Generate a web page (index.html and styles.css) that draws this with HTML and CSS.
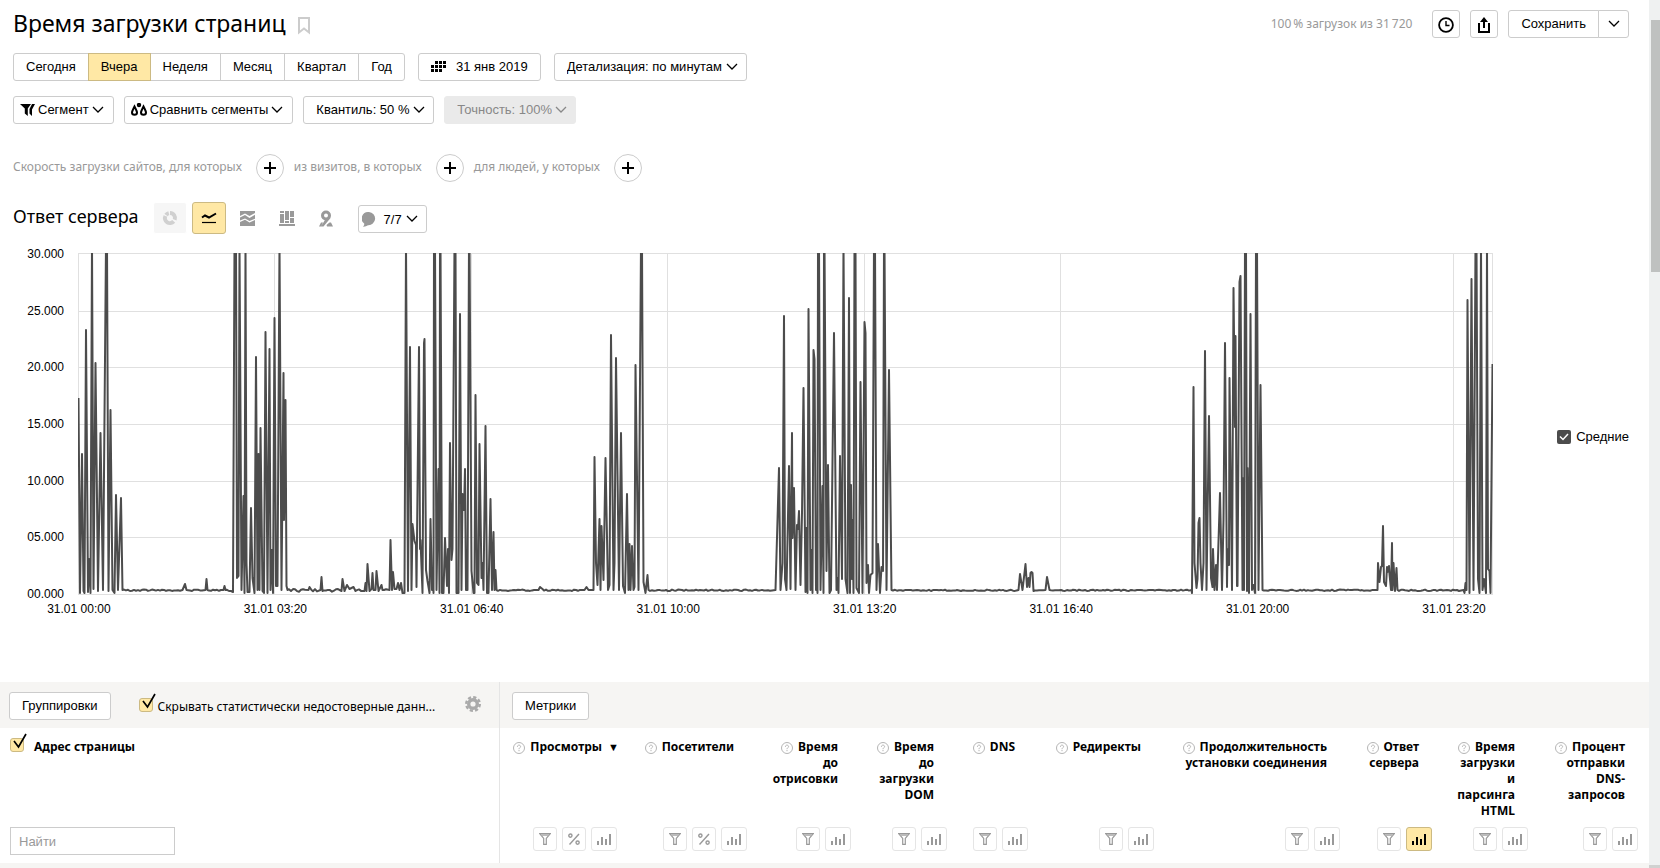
FILE: index.html
```html
<!DOCTYPE html>
<html lang="ru">
<head>
  <meta charset="UTF-8">
  <meta name="viewport" content="width=device-width, initial-scale=1.0">
  <title>Время загрузки страниц</title>
  <link rel="stylesheet" href="styles.css">
</head>
<body>
  <!-- Shared icons -->
  <svg class="sprite" width="0" height="0" aria-hidden="true">
    <symbol id="chevron" viewBox="0 0 12 8"><path d="M1 1l5 5 5-5" fill="none" stroke="currentColor" stroke-width="1.3"/></symbol>
    <symbol id="plus" viewBox="0 0 12 12"><path d="M6 0v12M0 6h12" stroke="currentColor" stroke-width="2"/></symbol>
    <symbol id="tick" viewBox="0 0 16 18"><path d="M3 8l4.500 6L15 1" fill="none" stroke="#000" stroke-width="1.700"/></symbol>
    <symbol id="help" viewBox="0 0 12 12"><circle cx="6" cy="6" r="5.5" fill="none" stroke="#b5b5b5"/><path d="M4.4 4.8C4.4 2.5 7.7 2.7 7.6 4.7 7.5 5.8 6 5.7 6 7.2M6 8v1.2" fill="none" stroke="#b5b5b5"/></symbol>
    <symbol id="filter" viewBox="0 0 12 12"><path d="M.8.7h10.4L7.3 5.4v6H4.7v-6z" fill="none" stroke="#999" stroke-width="1.2"/><path d="M1.5 1h9L9 3H3z" fill="#bbb"/></symbol>
    <symbol id="percent" viewBox="0 0 12 12"><g fill="none" stroke="#999" stroke-width="1.4"><path d="M11 1L1.5 11.5"/><circle cx="2.4" cy="2.6" r="1.6"/><circle cx="9.6" cy="9.6" r="1.6"/></g></symbol>
    <symbol id="bars" viewBox="0 0 14 11"><path d="M0 7h2v4H0zM4 3h2v8H4zM8 5h2v6H8zM12 0h2v11h-2z" fill="currentColor"/></symbol>
  </svg>

  <main class="page">
    <header class="header">
      <h1 class="title">Время загрузки страниц</h1>
      <svg class="bookmark" width="12" height="18" viewBox="0 0 12 18"><path d="M1 1h10v14.5l-5-4-5 4z" fill="none" stroke="#ccc" stroke-width="2"/></svg>
      <span class="sample">100&#8201;% загрузок из 31&#8201;720</span>
      <button class="button button-icon" aria-label="История">
        <svg width="16" height="16" viewBox="0 0 16 16" fill="none" stroke="#000"><circle cx="8" cy="8" r="6.9" stroke-width="1.8"/><path d="M8 4v4.5h3.5" stroke-width="1.4"/></svg>
      </button>
      <button class="button button-icon" aria-label="Экспорт">
        <svg width="12" height="16" viewBox="0 0 12 16"><path d="M1 6v9h10V6" fill="none" stroke="#000" stroke-width="2"/><path d="M5 11V5H2l4-5 4 5H7v6z"/></svg>
      </button>
      <div class="group save">
        <button class="button">Сохранить</button>
        <button class="button" aria-label="Другие варианты"><svg width="12" height="8"><use href="#chevron"/></svg></button>
      </div>
    </header>

    <div class="row periods">
      <div class="group">
        <button class="button">Сегодня</button>
        <button class="button active">Вчера</button>
        <button class="button">Неделя</button>
        <button class="button">Месяц</button>
        <button class="button">Квартал</button>
        <button class="button">Год</button>
      </div>
      <button class="button date">
        <svg width="15" height="11" viewBox="0 0 15 11"><path d="M4 0h3v3H4zM8 0h3v3H8zM12 0h3v3h-3zM0 4h3v3H0zM4 4h3v3H4zM8 4h3v3H8zM12 4h3v3h-3zM0 8h3v3H0zM4 8h3v3H4zM8 8h3v3H8z"/></svg>
        31 янв 2019
      </button>
      <label class="select">
        <select aria-label="Детализация"><option>Детализация: по минутам</option></select>
        <svg width="12" height="8"><use href="#chevron"/></svg>
      </label>
    </div>

    <div class="row segments">
      <button class="button menu">
        <svg width="15" height="12" viewBox="0 0 15 12"><path d="M0 0h11L7.800 4.500V12L4.800 9.500V4.500z"/><path d="M12 0h3l-3 5.500V12L9.500 9.500V5z"/></svg>
        Сегмент
        <svg width="12" height="8"><use href="#chevron"/></svg>
      </button>
      <button class="button menu">
        <svg width="16" height="13" viewBox="0 0 16 13" fill="none" stroke="#000" stroke-width="2"><path d="M3.500 3.500C2 6.500 1 8 1 9.600c0 3 5 3 5 0C6 8 5 6.500 3.500 3.500z"/><path d="M12.500 3.500C11 6.500 10 8 10 9.600c0 3 5 3 5 0 0-1.600-1-3.100-2.500-6.100z"/><circle cx="8" cy="2" r="1.200"/></svg>
        Сравнить сегменты
        <svg width="12" height="8"><use href="#chevron"/></svg>
      </button>
      <label class="select">
        <select aria-label="Квантиль"><option>Квантиль: 50 %</option></select>
        <svg width="12" height="8"><use href="#chevron"/></svg>
      </label>
      <label class="select disabled">
        <select aria-label="Точность" disabled><option>Точность: 100%</option></select>
        <svg width="12" height="8"><use href="#chevron"/></svg>
      </label>
    </div>

    <div class="row conditions">
      <span>Скорость загрузки сайтов, для которых</span>
      <button class="add" aria-label="Добавить условие"><svg width="12" height="12"><use href="#plus"/></svg></button>
      <span>из визитов, в которых</span>
      <button class="add" aria-label="Добавить условие"><svg width="12" height="12"><use href="#plus"/></svg></button>
      <span>для людей, у которых</span>
      <button class="add" aria-label="Добавить условие"><svg width="12" height="12"><use href="#plus"/></svg></button>
    </div>

    <div class="row chart-head">
      <h2 class="subtitle">Ответ сервера</h2>
      <div class="types">
        <button class="type off" disabled aria-label="Круговая">
          <svg width="16" height="16" viewBox="0 0 16 16" fill="none" stroke="#d0d0d0" stroke-width="4"><path d="M8 3A5 5 0 0 1 12.700 9.700"/><path d="M11.700 11.400A5 5 0 0 1 3.400 6"/><path d="M4 5A5 5 0 0 1 6.800 3.100"/></svg>
        </button>
        <button class="type active" aria-label="Линии">
          <svg width="16" height="12" viewBox="0 0 16 12" fill="none" stroke="#000"><path d="M1 5.500l3-2 4 2 7-4" stroke-width="2"/><path d="M1 10.500h14" stroke-width="1.200"/></svg>
        </button>
        <button class="type" aria-label="Области">
          <svg width="15" height="15" viewBox="0 0 15 15"><path d="M0 0h15v2L9.500 5 5 2.500 0 5zM0 6.500L5 4l4.500 3L15 3.800v4L9.500 10 5 7.500 0 9.500zM0 11l5-2.200 4.500 2.700L15 9v6H0z" fill="#999"/></svg>
        </button>
        <button class="type" aria-label="Колонки">
          <svg width="16" height="16" viewBox="0 0 16 16"><path d="M1 1h4v2H1zM1 4h4v9H1zM6 1h4v9H6zM6 11h4v2H6zM11 1h4v6h-4zM11 8h4v5h-4zM0 14h16v2H0z" fill="#999"/></svg>
        </button>
        <button class="type" aria-label="Карта">
          <svg width="14" height="17" viewBox="0 0 14 17"><circle cx="7" cy="5.500" r="3.500" fill="none" stroke="#999" stroke-width="3"/><path d="M11.500 8L4.500 16.500H2L6.500 9zM0 16.500l2-4h2l-2 4zM7.500 15l3-2.500h1.500l2 4H8z" fill="#999"/></svg>
        </button>
      </div>
      <button class="button comments">
        <svg width="14" height="16" viewBox="0 0 14 16"><path d="M7 1a6.500 6.500 0 1 1-1 13.200C4.500 15 3 15.800 1 15.600c1-.8 1.400-1.800 1.200-3A6.500 6.500 0 0 1 7 1z" fill="#999"/></svg>
        <span>7/7</span>
        <svg width="12" height="8"><use href="#chevron"/></svg>
      </button>
    </div>

    <section class="chart">
      <div class="axis-y">
        <span>30.000</span>
        <span>25.000</span>
        <span>20.000</span>
        <span>15.000</span>
        <span>10.000</span>
        <span>05.000</span>
        <span>00.000</span>
      </div>
      <div class="plot">
        <svg class="lines" viewBox="0 0 1415 342" preserveAspectRatio="none">
          <path class="grid" d="M0 .5h1415M0 58.500h1415M0 114.500h1415M0 171.500h1415M0 228.500h1415M0 284.500h1415M0 341.500h1415M.5 0v342M196.500 0v342M393.500 0v342M589.500 0v342M786.500 0v342M982.500 0v342M1178.500 0v342M1375.500 0v342M1414.500 0v342"/>
          <polyline id="series" class="series" points=""/>
        </svg>
        <div class="axis-x">
          <span>31.01 00:00</span>
          <span>31.01 03:20</span>
          <span>31.01 06:40</span>
          <span>31.01 10:00</span>
          <span>31.01 13:20</span>
          <span>31.01 16:40</span>
          <span>31.01 20:00</span>
          <span>31.01 23:20</span>
        </div>
      </div>
      <label class="legend">
        <span class="check-dark">
          <input type="checkbox" checked>
          <svg width="10" height="8" viewBox="0 0 10 8"><path d="M1 3.500l3 3L9 1" fill="none" stroke="#fff" stroke-width="1.500"/></svg>
        </span>
        Средние
      </label>
    </section>

    <div class="toolbar">
      <div class="toolbar-left">
        <button class="button">Группировки</button>
        <label class="hide-rows">
          <span class="check"><input type="checkbox" checked><svg width="16" height="18"><use href="#tick"/></svg></span>
          <span class="hide-text">Скрывать статистически недостоверные данн...</span>
        </label>
        <button class="gear" aria-label="Настройки">
          <svg width="16" height="16" viewBox="0 0 16 16"><circle cx="8" cy="8" r="4.300" fill="none" stroke="#aaa" stroke-width="3.400"/><circle cx="8" cy="8" r="6.800" fill="none" stroke="#aaa" stroke-width="2.400" stroke-dasharray="3.200 2.140"/></svg>
        </button>
      </div>
      <div class="toolbar-right">
        <button class="button">Метрики</button>
      </div>
    </div>

    <table class="metrics">
      <colgroup>
        <col class="w-page"><col class="w-views"><col class="w-users"><col class="w-paint"><col class="w-dom"><col class="w-dns"><col class="w-redirect"><col class="w-connect"><col class="w-server"><col class="w-parse"><col class="w-share">
      </colgroup>
      <thead>
        <tr class="names">
          <th class="page-col">
            <label class="page-label">
              <span class="check"><input type="checkbox" checked><svg width="16" height="18"><use href="#tick"/></svg></span>
              Адрес страницы
            </label>
          </th>
          <th class="sorted"><svg class="help" width="12" height="12"><use href="#help"/></svg>Просмотры<span class="arrow">▼</span></th>
          <th><svg class="help" width="12" height="12"><use href="#help"/></svg>Посетители</th>
          <th><svg class="help" width="12" height="12"><use href="#help"/></svg>Время<br>до<br>отрисовки</th>
          <th><svg class="help" width="12" height="12"><use href="#help"/></svg>Время<br>до<br>загрузки<br>DOM</th>
          <th><svg class="help" width="12" height="12"><use href="#help"/></svg>DNS</th>
          <th><svg class="help" width="12" height="12"><use href="#help"/></svg>Редиректы</th>
          <th><svg class="help" width="12" height="12"><use href="#help"/></svg>Продолжительность<br>установки соединения</th>
          <th><svg class="help" width="12" height="12"><use href="#help"/></svg>Ответ<br>сервера</th>
          <th><svg class="help" width="12" height="12"><use href="#help"/></svg>Время<br>загрузки<br>и<br>парсинга<br>HTML</th>
          <th><svg class="help" width="12" height="12"><use href="#help"/></svg>Процент<br>отправки<br>DNS-<br>запросов</th>
        </tr>
        <tr class="tools">
          <td class="page-col"><input class="search" type="text" placeholder="Найти" aria-label="Найти"></td>
          <td data-tools="filter percent bars"></td>
          <td data-tools="filter percent bars"></td>
          <td data-tools="filter bars"></td>
          <td data-tools="filter bars"></td>
          <td data-tools="filter bars"></td>
          <td data-tools="filter bars"></td>
          <td data-tools="filter bars"></td>
          <td data-tools="filter bars" class="current"></td>
          <td data-tools="filter bars"></td>
          <td data-tools="filter bars"></td>
        </tr>
      </thead>
    </table>
    <div class="totals"></div>
  </main>

  <div class="scroll" aria-hidden="true">
    <div class="thumb"></div>
    <div class="corner"></div>
  </div>

  <script src="script.js"></script>
</body>
</html>
```

FILE: styles.css
```css
* {
  box-sizing: border-box;
}

body {
  display: grid;
  grid-template-columns: minmax(0, 1fr) 11px;
  min-height: 100vh;
  margin: 0;
  background: #fff;
  color: #000;
  font-family: "Noto Sans", sans-serif;
  font-size: 12px;
}

.sprite {
  position: absolute;
}

svg {
  flex: none;
}

.page {
  display: flex;
  flex-direction: column;
  padding-top: 10px;
}

/* Buttons */
button,
select,
input {
  margin: 0;
  font-family: "Liberation Sans", Arial, sans-serif;
  font-size: 13px;
  color: #000;
}

.button {
  display: flex;
  align-items: center;
  justify-content: center;
  height: 28px;
  padding: 0 12px 2px;
  border: 1px solid #ccc;
  border-radius: 3px;
  background: #fff;
  white-space: nowrap;
  cursor: pointer;
}

.button-icon {
  width: 28px;
  padding: 1px 0 0;
}

.group {
  display: flex;
}

.group .button {
  border-radius: 0;
}

.group .button + .button {
  margin-left: -1px;
}

.group .button:first-child {
  border-radius: 3px 0 0 3px;
}

.group .button:last-child {
  border-radius: 0 3px 3px 0;
}

.group .active {
  position: relative;
  border-color: #ccba83;
  background: #ffe8a5;
}

.select {
  display: flex;
  align-items: center;
  gap: 3px;
  height: 28px;
  padding: 0 8px 1px 12px;
  border: 1px solid #ccc;
  border-radius: 3px;
}

.select select {
  appearance: none;
  padding: 0;
  border: 0;
  background: none;
}

.select.disabled {
  border-color: #eaeaea;
  background: #eaeaea;
  color: #888;
}

.select.disabled select {
  color: #888;
  opacity: 1;
}

/* Header */
.header {
  display: flex;
  align-items: center;
  height: 28px;
  padding: 0 20px 0 13px;
}

.title {
  margin: 0;
  padding-bottom: 2px;
  font-size: 23px;
  font-weight: 400;
  line-height: 26px;
}

.bookmark {
  margin: 4px 0 0 12px;
}

.sample {
  margin-left: auto;
  margin-right: 10px;
  padding-bottom: 2px;
  color: #999;
}

.header .button-icon {
  margin-left: 10px;
}

.save {
  margin-left: 10px;
}

.save .button:last-child {
  width: 31px;
  padding: 0;
}

/* Filters */
.row {
  display: flex;
  align-items: center;
  padding-left: 13px;
}

.periods {
  gap: 13px;
  margin-top: 15px;
}

.date {
  gap: 10px;
}

.segments {
  gap: 10px;
  margin-top: 15px;
}

.menu {
  gap: 3px;
  padding: 0 9px 1px 6px;
}

.conditions {
  gap: 10px;
  margin-top: 30px;
  color: #999;
}

.conditions span {
  padding-bottom: 3px;
}

.add {
  display: flex;
  align-items: center;
  justify-content: center;
  width: 28px;
  height: 28px;
  margin-left: 4px;
  padding: 0;
  border: 1px solid #ccc;
  border-radius: 50%;
  background: #fff;
}

/* Chart */
.chart-head {
  height: 32px;
  margin-top: 20px;
}

.subtitle {
  margin: 0;
  padding-bottom: 4px;
  font-size: 18px;
  font-weight: 400;
}

.types {
  display: flex;
  gap: 5px;
  margin: 0 15px 0 14px;
}

.type {
  display: flex;
  align-items: center;
  justify-content: center;
  width: 34px;
  height: 32px;
  padding: 0;
  border: 1px solid transparent;
  border-radius: 3px;
  background: none;
}

.type.off {
  border-color: #fff;
  background: #f6f6f6;
}

.type.active {
  border-color: #ccba83;
  background: #ffe8a5;
}

.comments {
  gap: 4px;
  margin-top: 2px;
  padding: 0 8px 0 3px;
}

.comments span {
  padding-left: 4px;
}

.chart {
  display: grid;
  grid-template-columns: 64px minmax(0, 1fr) 136px;
  padding-right: 20px;
  margin-top: 19px;
  font: 12px/14px "Liberation Sans", Arial, sans-serif;
}

.axis-y {
  display: flex;
  flex-direction: column;
  justify-content: space-between;
  align-items: flex-end;
  height: 354px;
  margin-top: -6px;
}

.plot {
  margin-left: 14px;
}

.lines {
  display: block;
  width: 100%;
  height: 342px;
}

.grid {
  fill: none;
  stroke: #e0e0e0;
  stroke-width: 1;
}

.series {
  fill: none;
  stroke: #4c4c4c;
  stroke-width: 2;
  stroke-linejoin: round;
}

/* one label for each 200 of the 1440 minutes */
.axis-x {
  display: flex;
  height: 14px;
  margin: 7px 0 0 -6.88%;
}

.axis-x span {
  flex: 0 0 12.99%;
  text-align: center;
}

.legend {
  display: flex;
  align-items: center;
  justify-content: flex-end;
  gap: 5px;
  height: 367px;
  font-size: 13px;
}

.check-dark {
  position: relative;
  width: 14px;
  height: 14px;
}

.check-dark input {
  display: block;
  appearance: none;
  width: 14px;
  height: 14px;
  border-radius: 2px;
  background: #4c4c4c;
}

.check-dark svg {
  position: absolute;
  top: 3px;
  left: 2px;
}

/* Table */
.toolbar {
  display: grid;
  grid-template-columns: 500px minmax(0, 1fr);
  height: 46px;
  margin-top: 62px;
  background: #f6f5f3;
}

.toolbar-left,
.toolbar-right {
  display: flex;
  align-items: center;
}

.toolbar-left {
  padding: 2px 18px 0 9px;
  border-right: 1px solid #e5e5e5;
}

.toolbar-right {
  padding: 2px 0 0 12px;
}

.hide-rows {
  display: flex;
  align-items: center;
  gap: 5px;
  margin-left: 28px;
}

.hide-text {
  white-space: nowrap;
}

.check {
  position: relative;
  flex: none;
  width: 14px;
  height: 14px;
}

.hide-rows .check {
  margin-bottom: 2px;
}

.check input {
  display: block;
  appearance: none;
  width: 14px;
  height: 14px;
  border: 1px solid #ccba83;
  border-radius: 3px;
  background: #ffe8a5;
}

.check svg {
  position: absolute;
  top: -5px;
  left: 1px;
}

.gear {
  display: flex;
  margin: 0 0 4px auto;
  padding: 0;
  border: 0;
  background: none;
}

.metrics {
  width: 100%;
  table-layout: fixed;
  border-collapse: separate;
  border-spacing: 0;
}

.w-page { width: 500px; }
.w-views { width: 128px; }
.w-users { width: 130px; }
.w-paint { width: 104px; }
.w-dom { width: 96px; }
.w-dns { width: 81px; }
.w-redirect { width: 126px; }
.w-connect { width: 186px; }
.w-server { width: 92px; }
.w-parse { width: 96px; }
.w-share { width: 110px; }

.metrics th {
  height: 99px;
  padding: 11px 24px 0 0;
  vertical-align: top;
  text-align: right;
  font-weight: 700;
  line-height: 16px;
  white-space: nowrap;
}

.metrics td {
  height: 36px;
  padding: 0 11px 0 0;
  vertical-align: top;
}

.metrics .sorted {
  padding-right: 9px;
}

.arrow {
  margin-left: 6px;
  font-size: 11px;
}

.help {
  margin-right: 5px;
  vertical-align: -3px;
}

.metrics .page-col {
  padding-left: 10px;
  border-right: 1px solid #e5e5e5;
  text-align: left;
}

.page-label {
  display: flex;
  gap: 10px;
}

.page-label .check {
  margin-top: -1px;
}

.search {
  display: block;
  width: 165px;
  height: 28px;
  padding: 0 8px;
  border: 1px solid #ccc;
}

.search::placeholder {
  color: #999;
}

.tool-list {
  display: flex;
  justify-content: flex-end;
  gap: 5px;
}

.tool {
  display: flex;
  align-items: center;
  justify-content: center;
  width: 24px;
  height: 24px;
  padding: 0;
  border: 1px solid #e5e5e5;
  border-radius: 3px;
  background: #fff;
  color: #999;
}

.tool-bars {
  width: 26px;
}

.current .tool-bars {
  border-color: #ccba83;
  background: #ffe8a5;
  color: #000;
}

.totals {
  flex: 1;
  min-height: 5px;
  background: #f6f5f3;
}

/* Scroll track */
.scroll {
  display: flex;
  flex-direction: column;
  padding: 20px 0 0 2px;
  background: #eff1f1;
}

.thumb {
  height: 252px;
  background: #bfc1c0;
}

.corner {
  height: 3px;
  margin: auto 0 0 -2px;
  background: #d0d1d0;
}
```

FILE: script.js
```js
// Points of the response time line, x 0..1415, y 0..342 from the top
const points = [
  [0,145],[1.5,340],[3.5,201],[5,338],[6,340],[7.5,77],[9.5,339],[10.5,306],[12,340],[13.5,-9],[15,336],[17,110],[19.5,338],[22,180],[24.5,337],[27.5,-9],[28.5,-9],[30,338],[32,157],[34,337],[36,340],[37.5,242],[39.5,337],[42.5,245],[44,337],
  [104,337],[106.5,331],[108,337],[127,337],[128,326],[129,337],[145,337],[146,333],[147,337],
  [154.5,339],[156,-9],[157.5,-9],[158.5,325],[160,323],[161,-9],[163,337],[165,243],[166,340],[167,-9],[168,310],[169,339],[171,339],[172.5,255],[174,325],[176,340],[177.5,104],[179,337],[180,201],[181,337],[182,175],[184,338],[185.5,340],[187,79],[189,340],[191,96],[192,337],[193,297],[194.5,340],[196,65],[197.5,333],[199,333],[201,-9],[203,337],[205,120],[205.5,267],[207,147],[208,333],[209,337],
  [230,337],[231,334],[233,337],[242,337],[243,324],[244,338],[263,338],[264,326],[266,338],[268.5,332],[271,336],[275,334],[277,338],[286,338],[287,330],[288,338],[289,311],[291,338],[293,336],[294,320],[295,337],[297,337],[298,318],[300,338],[303,332],[304,337],[311,337],[312,287],[313.5,337],[314.5,319],[316,336],[318,336],[319.5,330],[321,337],[322.5,330],[324,340],
  [326,340],[327.5,-9],[329.5,338],[331.5,94],[333,337],[334,271],[336,288],[337.5,292],[338,334],[340.5,94],[341.5,296],[342,287],[344,340],[345.5,90],[346,86],[347.5,317],[349,328],[351,340],[352,266],[353.5,337],[354,317],[355,340],[355.5,-9],[356.5,-9],[358,337],[360,216],[361,340],[361.5,-9],[362,-9],[363.5,340],[365,340],[366.5,285],[368.5,333],[369.5,296],[370.5,340],[371.5,190],[373,307],[374,296],[376,-9],[377,-9],[378,340],[380,340],[381.5,61],[383,337],[384,241],[385.5,257],[386.5,216],[387.5,337],[389,337],[390.5,-9],[391,-9],[393,318],[395,340],[396,340],[397,142],[398.5,330],[400,332],[401,191],[403,325],[404,310],[405,337],[407,173],[408.5,340],[410,340],[412,246],[413.5,337],[415,279],[416,337],[417,317],[418,337],
  [460,337],[461.5,334],[464,336],[506,337],[508,334],[510,337],
  [515,337],[516,204],[517.5,310],[519,332],[521,266],[522,337],[523,273],[525,327],[527,205],[529.5,337],[531,332],[532.5,82],[535,337],[536,310],[537.5,105],[540.5,337],[542.5,180],[544.5,333],[546.5,340],[548.5,241],[550,337],[551,291],[552,337],[553.5,293],[555,337],[556,334],[557,112],[560,337],[562.5,-9],[563.5,-9],[565,329],[567,340],[569,322],[570,337],
  [697,337],[700.5,215],[702,337],[704,310],[705.5,63],[706.5,326],[708,337],[710.5,213],[712,336],[713.5,180],[714,285],[715.5,235],[717,337],[718.5,272],[719.5,276],[720.5,258],[722,332],[723.5,260],[725,135],[727,339],[728,275],[729,340],[730,56],[732,337],[733,297],[734,340],[735,97],[736,106],[737.5,337],[738,322],[739,340],[739.5,-9],[740.5,-9],[742,337],[744,233],[745,340],[745.5,-9],[746,-9],[748,318],[749.5,212],[751,340],[752.5,337],[755.5,80],[758,337],[759,325],[760,340],[761.5,203],[763.5,326],[765,-9],[767,326],[769,340],[770.5,45],[771.5,340],[772.5,232],[773.5,326],[774,267],[775,340],[776,-9],[777,-9],[778,335],[780.5,340],[782,129],[784,340],[786,69],[787,80],[788,330],[789.5,312],[790.5,340],[792,322],[794,320],[795.5,-9],[796.5,-9],[798,337],[799.5,291],[801.5,340],[803,314],[804.5,318],[805.5,-9],[806,-9],[808,337],[810.5,117],[813,337],
  [940,337],[941.5,321],[944,337],[947,311],[948.5,334],[950,325],[951,334],[952,320],[953,319],[954,320],[955,338],[967,337],[968.5,324],[971,337],
  [1113,337],[1113.5,340],[1115,134],[1116,310],[1118,335],[1119,326],[1120,270],[1121,265],[1122,310],[1123.5,337],[1125,310],[1126.5,98],[1128,337],[1130.5,163],[1132.5,325],[1134,334],[1134.5,296],[1136,337],[1137.5,312],[1138.5,337],[1141.5,240],[1143.5,337],[1145,267],[1146.5,90],[1148.5,334],[1149,296],[1150.5,312],[1151,125],[1153.5,337],[1155,35],[1156.5,174],[1157,83],[1158.5,333],[1159,333],[1161,29],[1162,23],[1164,337],[1165,225],[1165.5,337],[1166.5,-9],[1167.5,-9],[1168.5,338],[1169,215],[1170.5,340],[1172,61],[1173.5,337],[1175,332],[1176.5,340],[1177.5,-9],[1178.5,-9],[1180,337],[1182,132],[1184,337],
  [1299,337],[1299.5,310],[1301,329],[1302.5,314],[1303.5,313],[1304.5,273],[1305.5,329],[1307.5,333],[1308.5,314],[1309,319],[1310.5,313],[1311,321],[1312.5,337],[1313.5,290],[1314,337],[1315,310],[1316.5,338],[1318,315],[1319,337],
  [1385,337],[1386,340],[1387,330],[1388,337],[1389,47],[1391,340],[1393,26],[1395,337],[1397,-9],[1398,-9],[1399.5,326],[1401,340],[1402.5,-9],[1404,337],[1405.5,326],[1407.5,340],[1408.5,-9],[1409.5,316],[1411,318],[1412,340],[1414,111]
];

// Quiet minutes between the peaks wobble a little around the base
function drawSeries() {
  const line = [];
  let seed = 7;
  points.forEach(([x, y], i) => {
    line.push(x + 0.5 + ',' + y);
    const next = points[i + 1];
    if (!next || next[0] - x < 5) {
      return;
    }
    const spread = x > 208 && x < 326 ? 3 : 1.4;
    for (let step = x + 2; step < next[0] - 1; step += 2) {
      seed = (seed * 1103 + 331) % 7919;
      line.push(step + ',' + (337.3 + (seed / 7919 - 0.5) * spread).toFixed(1));
    }
  });
  document.getElementById('series').setAttribute('points', line.join(' '));
}

// Icon buttons under each metric name
const tools = {
  filter: { title: 'Фильтр', width: 12, height: 12 },
  percent: { title: 'Проценты', width: 12, height: 12 },
  bars: { title: 'На графике', width: 14, height: 11 }
};

function drawTools() {
  document.querySelectorAll('[data-tools]').forEach(cell => {
    const buttons = cell.dataset.tools.split(' ').map(name => {
      const tool = tools[name];
      return `<button class="tool tool-${name}" aria-label="${tool.title}"><svg width="${tool.width}" height="${tool.height}"><use href="#${name}"/></svg></button>`;
    });
    cell.innerHTML = `<div class="tool-list">${buttons.join('')}</div>`;
  });
}

drawSeries();
drawTools();
```
